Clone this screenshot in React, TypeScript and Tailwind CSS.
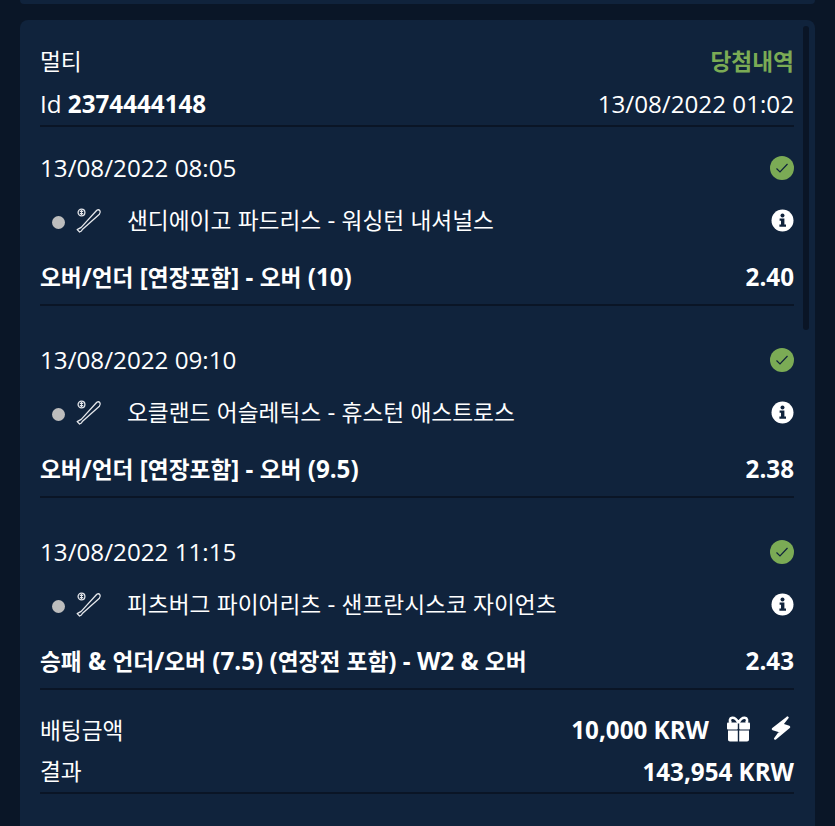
const font = "font-['Open_Sans','Noto_Sans_CJK_KR',sans-serif]";

interface ISelection {
  date: string;
  match: string;
  bet: string;
  odds: string;
}

const selections: ISelection[] = [
  { date: "13/08/2022 08:05", match: "샌디에이고 파드리스 - 워싱턴 내셔널스", bet: "오버/언더 [연장포함] - 오버 (10)", odds: "2.40" },
  { date: "13/08/2022 09:10", match: "오클랜드 어슬레틱스 - 휴스턴 애스트로스", bet: "오버/언더 [연장포함] - 오버 (9.5)", odds: "2.38" },
  { date: "13/08/2022 11:15", match: "피츠버그 파이어리츠 - 샌프란시스코 자이언츠", bet: "승패 & 언더/오버 (7.5) (연장전 포함) - W2 & 오버", odds: "2.43" },
];

// hangul runs a little smaller than the latin text around them
const Ko = ({ text }: { text: string }) => (
  <>
    {text.split(/([가-힣]+)/).map((part, index) =>
      index % 2 === 1 ? <span key={index} className="text-[22.7px]">{part}</span> : part
    )}
  </>
);

const BatIcon = () => (
  <svg width="26" height="26" viewBox="0 0 26 26" fill="none" stroke="#e5e7eb" strokeWidth="1.3">
    <circle cx="5.5" cy="5.5" r="3.4" />
    <path d="M5.5 3 V8 M3.8 4.4 H7.2 M3.8 6.6 H7.2" strokeWidth="1.1" />
    <path d="M1.2 22.6 L3.6 25 L5.4 24 L6.6 22.2 L23.4 7.2 C25.4 4.6 23.4 1.8 20.8 3.2 L5.2 20.4 L3.4 21.4 Z" strokeLinejoin="round" />
  </svg>
);

const CheckBadge = () => (
  <div className="flex h-6 w-6 items-center justify-center rounded-full bg-[#7bab55]">
    <svg width="14" height="12" viewBox="0 0 14 12" fill="none" stroke="#10233c" strokeWidth="1.2">
      <path d="M1.5 6.5 L5 10 L12.5 2" />
    </svg>
  </div>
);

const InfoIcon = () => (
  <svg width="23" height="23" viewBox="0 0 23 23">
    <circle cx="11.5" cy="11.5" r="11" fill="white" />
    <circle cx="11.5" cy="6.4" r="2" fill="#10233c" />
    <path d="M8.6 9.6 H13.4 V15.6 H15 V17.8 H8.4 V15.6 H10 V11.8 H8.6 Z" fill="#10233c" />
  </svg>
);

const GiftIcon = () => (
  <svg width="25" height="26" viewBox="0 0 25 26" fill="white">
    <path d="M12.5 7 C10.5 3 8.5 1.6 6.2 1.8 C3.8 2 3 5 5 7 M12.5 7 C14.5 3 16.5 1.6 18.8 1.8 C21.2 2 22 5 20 7" fill="none" stroke="white" strokeWidth="2.6" />
    <rect x="1" y="6.5" width="10.8" height="7" rx="1" />
    <rect x="13.2" y="6.5" width="10.8" height="7" rx="1" />
    <path d="M2 14.5 H11.8 V25.5 H4 C2.8 25.5 2 24.7 2 23.5 Z" />
    <path d="M13.2 14.5 H23 V23.5 C23 24.7 22.2 25.5 21 25.5 H13.2 Z" />
  </svg>
);

const BoltIcon = () => (
  <svg width="20" height="24" viewBox="0 0 20 24" fill="white" stroke="white" strokeWidth="2.4" strokeLinejoin="round">
    <path d="M16.5 1.6 L2 13 L9.4 15.4 L4.2 22.6 L18 11 L11 8.6 Z" />
  </svg>
);

const Selection = ({ selection }: { selection: ISelection }) => (
  <div className="mb-[32px] border-b-2 border-[#0a1526] pb-[5px]">
    <div className="flex h-[44px] items-center justify-between">
      <p>{selection.date}</p>
      <CheckBadge />
    </div>
    <div className="mt-[8px] flex h-[44px] items-center justify-between">
      <div className="flex items-center">
        <span className="ml-3 mt-1 h-[13px] w-[13px] rounded-full bg-[#bdbdbd]" />
        <span className="ml-[11px]"><BatIcon /></span>
        <p className="ml-[25px]"><Ko text={selection.match} /></p>
      </div>
      <InfoIcon />
    </div>
    <div className="mt-[13px] flex h-[44px] items-center justify-between font-bold">
      <p><Ko text={selection.bet} /></p>
      <p>{selection.odds}</p>
    </div>
  </div>
);

export default function App() {
  return (
    <div className={`${font} h-[826px] overflow-hidden bg-[#0a1627] px-5 text-[24.2px] leading-[32px] text-white`}>
      <div className="h-[4px] rounded-b-lg bg-[#10233c]" />
      <div className="relative mt-[16px] h-[900px] rounded-lg bg-[#10233c] pl-5 pr-[21px] pt-[19px]">
        <div className="absolute right-[6px] top-[6px] h-[304px] w-[6px] rounded-full bg-[#0a1526]" />
        <div className="mb-px flex h-[44px] items-center justify-between">
          <p><Ko text="멀티" /></p>
          <p className="font-bold text-[#7bab55]"><Ko text="당첨내역" /></p>
        </div>
        <div className="mb-[19px] flex h-[43px] items-center justify-between border-b-2 border-[#0a1526] pb-[2px]">
          <p>Id <span className="font-bold">2374444148</span></p>
          <p>13/08/2022 01:02</p>
        </div>
        {selections.map((selection) => (
          <Selection key={selection.date} selection={selection} />
        ))}
        <div className="-mt-[13px] flex h-[42px] items-center justify-between">
          <p><Ko text="배팅금액" /></p>
          <div className="flex items-center font-bold">
            <p>10,000 KRW</p>
            <span className="mb-[3px] ml-[17px]"><GiftIcon /></span>
            <span className="mb-1 ml-[20px] mr-[3px]"><BoltIcon /></span>
          </div>
        </div>
        <div className="flex h-[43px] items-center justify-between border-b-2 border-[#0a1526]">
          <p><Ko text="결과" /></p>
          <p className="font-bold">143,954 KRW</p>
        </div>
      </div>
    </div>
  );
}
